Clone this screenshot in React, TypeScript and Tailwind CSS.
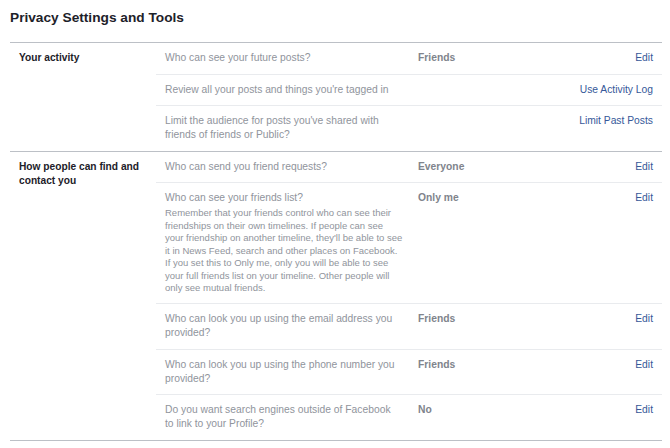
import React from 'react';

type Row = {
  question: string;
  hint?: string[];
  value?: string;
  action: string;
};

type Section = {
  label: string;
  rows: Row[];
};

const SECTIONS: Section[] = [
  {
    label: 'Your activity',
    rows: [
      { question: 'Who can see your future posts?', value: 'Friends', action: 'Edit' },
      { question: "Review all your posts and things you're tagged in", action: 'Use Activity Log' },
      {
        question: "Limit the audience for posts you've shared with friends of friends or Public?",
        action: 'Limit Past Posts',
      },
    ],
  },
  {
    label: 'How people can find and contact you',
    rows: [
      { question: 'Who can send you friend requests?', value: 'Everyone', action: 'Edit' },
      {
        question: 'Who can see your friends list?',
        hint: [
          'Remember that your friends control who can see their',
          'friendships on their own timelines. If people can see',
          "your friendship on another timeline, they'll be able to see",
          'it in News Feed, search and other places on Facebook.',
          'If you set this to Only me, only you will be able to see',
          'your full friends list on your timeline. Other people will',
          'only see mutual friends.',
        ],
        value: 'Only me',
        action: 'Edit',
      },
      {
        question: 'Who can look you up using the email address you provided?',
        value: 'Friends',
        action: 'Edit',
      },
      {
        question: 'Who can look you up using the phone number you provided?',
        value: 'Friends',
        action: 'Edit',
      },
      {
        question: 'Do you want search engines outside of Facebook to link to your Profile?',
        value: 'No',
        action: 'Edit',
      },
    ],
  },
];

function SettingRow({ row, first }: { row: Row; first: boolean }) {
  return (
    <div
      className={
        'flex pl-[9px] pr-[9px] pt-[8px] pb-[8.5px] ' +
        (first ? '' : 'border-t border-[#e9ebee]')
      }
    >
      <div className="w-[233px] shrink-0">
        <div className="text-[10.3px] leading-[14px] text-[#90949c]">{row.question}</div>
        {row.hint && (
          <div className="mt-[2px] text-[9.5px] leading-[12.5px] whitespace-nowrap text-[#90949c]">
            {row.hint.map((line) => (
              <div key={line}>{line}</div>
            ))}
          </div>
        )}
      </div>
      <div className="ml-[20px] w-[120px] shrink-0 text-[10.3px] font-bold leading-[14px] text-[#80848c]">
        {row.value ?? ''}
      </div>
      <div className="flex-1 text-right text-[10.3px] leading-[14px] text-[#365899]">
        {row.action}
      </div>
    </div>
  );
}

export default function App() {
  return (
    <div
      className="h-[448px] w-[670px] overflow-hidden bg-white pl-[10px] pr-[8px]"
      style={{ fontFamily: '"Liberation Sans", Arial, sans-serif' }}
    >
      <h1 className="pt-[9px] pb-[15px] text-[13.7px] font-bold leading-[18px] text-[#1d2129]">
        Privacy Settings and Tools
      </h1>
      <div className="border-b border-[#bcc0c6]">
        {SECTIONS.map((section) => (
          <div key={section.label} className="flex border-t border-[#bcc0c6]">
            <div className="w-[146px] shrink-0 pl-[9px] pr-[8px] pt-[8px] text-[10.2px] font-bold leading-[14px] text-[#1d2129]">
              {section.label}
            </div>
            <div className="flex-1">
              {section.rows.map((row, i) => (
                <SettingRow key={row.question} row={row} first={i === 0} />
              ))}
            </div>
          </div>
        ))}
      </div>
    </div>
  );
}
